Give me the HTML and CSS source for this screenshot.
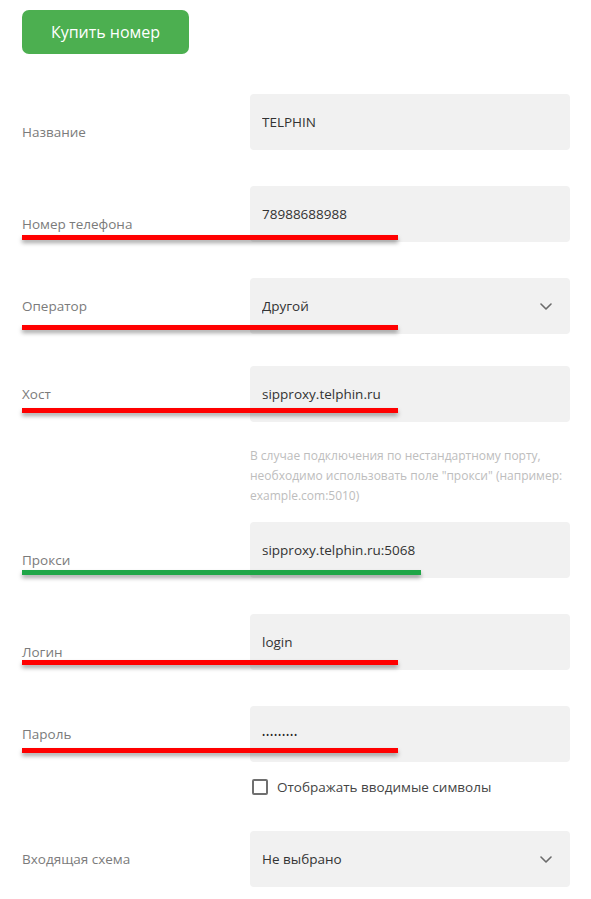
FILE: index.html
```html
<!DOCTYPE html>
<html lang="ru">
<head>
    <meta charset="UTF-8">
    <meta name="viewport" content="width=device-width, initial-scale=1.0">
    <title>Телефония — подключение</title>
    <link rel="stylesheet" href="styles.css">
</head>
<body>
    <div class="container">
        <button class="btn-buy" type="button">Купить номер</button>

        <form class="trunk-form">
            <div class="field field-first">
                <label class="field-label label-low" for="name">Название</label>
                <input class="field-input" id="name" type="text" value="TELPHIN">
            </div>

            <div class="field">
                <label class="field-label label-low" for="phone">Номер телефона</label>
                <input class="field-input" id="phone" type="text" value="78988688988">
                <span class="mark mark-phone"></span>
            </div>

            <div class="field field-tight">
                <label class="field-label" for="operator">Оператор</label>
                <div class="select-wrap">
                    <select class="field-input field-select" id="operator">
                        <option>Другой</option>
                    </select>
                    <svg class="chevron" width="12" height="7" viewBox="0 0 12 7"><path d="M1 1l5 5 5-5" fill="none" stroke="#6b6b6b" stroke-width="1.6" stroke-linecap="round" stroke-linejoin="round"/></svg>
                </div>
                <span class="mark mark-operator"></span>
            </div>

            <div class="field field-hinted">
                <label class="field-label" for="host">Хост</label>
                <input class="field-input" id="host" type="text" value="sipproxy.telphin.ru">
                <span class="mark mark-host"></span>
            </div>
            <p class="field-extra hint">В случае подключения по нестандартному порту, необходимо использовать поле "прокси" (например: example.com:5010)</p>

            <div class="field">
                <label class="field-label label-low" for="proxy">Прокси</label>
                <input class="field-input" id="proxy" type="text" value="sipproxy.telphin.ru:5068">
                <span class="mark mark-ok mark-proxy"></span>
            </div>

            <div class="field">
                <label class="field-label label-low" for="login">Логин</label>
                <input class="field-input" id="login" type="text" value="login">
                <span class="mark mark-login"></span>
            </div>

            <div class="field">
                <label class="field-label" for="password">Пароль</label>
                <input class="field-input field-password" id="password" type="password" value="123456789">
                <span class="mark mark-password"></span>
            </div>
            <label class="field-extra show-chars">
                <input type="checkbox" class="checkbox">
                <span>Отображать вводимые символы</span>
            </label>

            <div class="field field-last">
                <label class="field-label" for="scheme">Входящая схема</label>
                <div class="select-wrap">
                    <select class="field-input field-select" id="scheme">
                        <option>Не выбрано</option>
                    </select>
                    <svg class="chevron" width="12" height="7" viewBox="0 0 12 7"><path d="M1 1l5 5 5-5" fill="none" stroke="#6b6b6b" stroke-width="1.6" stroke-linecap="round" stroke-linejoin="round"/></svg>
                </div>
            </div>
        </form>
    </div>
</body>
</html>
```

FILE: styles.css
```css
body {
    margin: 0;
    background-color: #fff;
    font-family: "Open Sans", "Liberation Sans", sans-serif;
    color: #333;
}

.container {
    padding: 10px 21px 0 22px;
}

.btn-buy {
    display: block;
    width: 167px;
    height: 44px;
    padding: 0;
    border: none;
    border-radius: 7px;
    background-color: #4caf50;
    color: #fff;
    font-family: inherit;
    font-size: 16px;
    cursor: pointer;
}

.btn-buy:hover {
    background-color: #43a047;
}

.trunk-form {
    margin: 0;
}

.field {
    position: relative;
    display: grid;
    grid-template-columns: 228px 320px;
    align-items: center;
    margin-top: 36px;
}

.field-first {
    margin-top: 40px;
}

.field-hinted + .field-extra {
    margin-top: 24px;
}

.field-label {
    font-size: 13.5px;
    color: #7b7b7b;
}

.label-low {
    padding-top: 20px;
}

.field-input {
    box-sizing: border-box;
    width: 320px;
    height: 56px;
    padding: 0 12px;
    border: none;
    border-radius: 4px;
    background-color: #f1f1f1;
    font-family: inherit;
    font-size: 13.5px;
    color: #333;
    outline: none;
}

.field-password {
    font-size: 8.5px;
    letter-spacing: 0.8px;
    color: #222;
}

.select-wrap {
    position: relative;
}

.field-select {
    appearance: none;
    -webkit-appearance: none;
    cursor: pointer;
}

.chevron {
    position: absolute;
    right: 18px;
    top: 25px;
    pointer-events: none;
}

.field-extra {
    display: block;
    margin-left: 228px;
}

.hint {
    width: 320px;
    margin-bottom: 0;
    font-size: 12px;
    line-height: 20px;
    color: #bdbdbd;
}

.hint + .field {
    margin-top: 16px;
}

.field-tight + .field {
    margin-top: 32px;
}

.show-chars {
    display: flex;
    align-items: center;
    gap: 9px;
    margin-top: 16px;
    font-size: 13.5px;
    color: #444;
    cursor: pointer;
}

.checkbox {
    appearance: none;
    -webkit-appearance: none;
    box-sizing: border-box;
    width: 16px;
    height: 16px;
    margin: 0 0 0 2px;
    border: 2px solid #6f6f6f;
    border-radius: 2px;
    background: #fff;
}

.show-chars + .field {
    margin-top: 35px;
}

/* annotation strokes drawn over the form */
.mark {
    position: absolute;
    left: 0;
    width: 376px;
    height: 5px;
    background-color: #ff0000;
    box-shadow: 0 3px 4px rgba(0, 0, 0, 0.35);
}

.mark-ok {
    width: 399px;
    background-color: #1fa647;
}

.mark-phone { top: 49px; }
.mark-operator { top: 47px; }
.mark-host { top: 42px; }
.mark-proxy { top: 48px; }
.mark-login { top: 46px; }
.mark-password { top: 42px; }
```
